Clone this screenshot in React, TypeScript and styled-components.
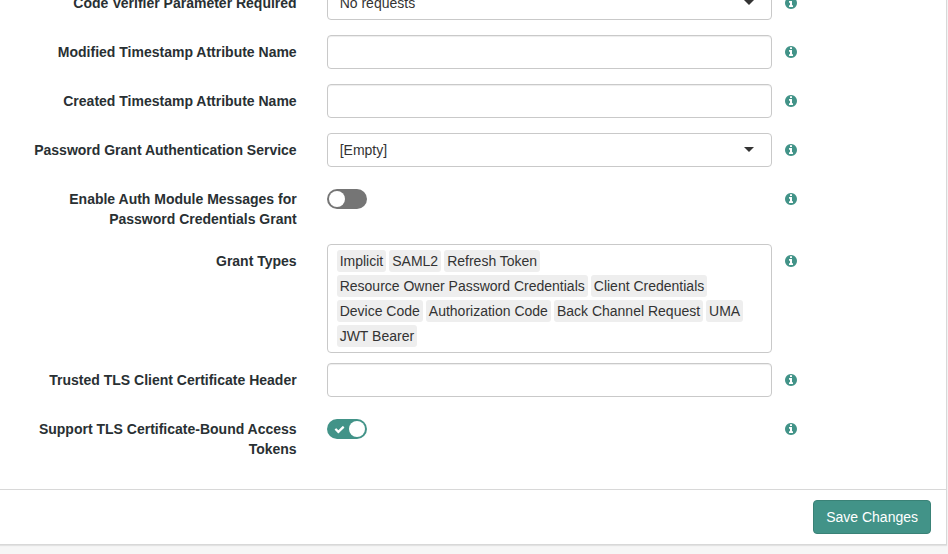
import React from "react";
import styled, { createGlobalStyle } from "styled-components";

const teal = "#429388";

const GlobalStyle = createGlobalStyle`
  * { box-sizing: border-box; }
  body {
    margin: 0;
    background: #f6f6f6;
    color: #333;
    font: 14px/20px "Liberation Sans", Arial, sans-serif;
  }
`;

const Page = styled.main`
  overflow: hidden;
  padding: 0 1px 8px 0;
`;

const Card = styled.form`
  background: #fff;
  border-right: 1px solid #d8d8d8;
  border-bottom: 1px solid #d8d8d8;
  box-shadow: 0 1px 1px rgba(0, 0, 0, 0.08);
`;

const Fields = styled.div`
  display: flex;
  flex-direction: column;
  gap: 15px;
  margin: -14px 1px 0 -5px;
  padding-bottom: 30px;
`;

const Row = styled.div<{ $tight?: boolean }>`
  display: grid;
  grid-template-columns: minmax(0, 4fr) minmax(0, 6fr) minmax(0, 2fr);
  margin-bottom: ${(p) => (p.$tight ? "-5px" : "0")};
`;

const Label = styled.label`
  padding: 7px 15px 0;
  color: #293033;
  font-weight: 700;
  text-align: right;
`;

const Control = styled.div`
  padding: 0 15px;
`;

const TextInput = styled.input`
  display: block;
  width: 100%;
  height: 34px;
  padding: 6px 12px;
  border: 1px solid #c9c9c9;
  border-radius: 4px;
  background: #fff;
  box-shadow: inset 0 1px 1px rgba(0, 0, 0, 0.075);
  color: inherit;
  font: inherit;
`;

const SelectWrap = styled.div`
  position: relative;
`;

const Select = styled.select`
  appearance: none;
  display: block;
  width: 100%;
  height: 34px;
  padding: 0 36px 0 12px;
  border: 1px solid #c9c9c9;
  border-radius: 4px;
  background: #fff;
  color: inherit;
  font: inherit;
`;

const Caret = styled.svg`
  position: absolute;
  top: 14px;
  right: 18px;
  width: 10px;
  height: 5px;
  fill: #333;
  pointer-events: none;
`;

const Switch = styled.div`
  position: relative;
  width: 40px;
  height: 20px;
  margin-top: 7px;
`;

const SwitchInput = styled.input`
  appearance: none;
  display: flex;
  align-items: center;
  width: 40px;
  height: 20px;
  margin: 0;
  padding: 0 2px;
  border-radius: 10px;
  background: #757575;
  &::after {
    content: "";
    width: 16px;
    height: 16px;
    border-radius: 50%;
    background: #fff;
  }
  &:checked {
    justify-content: flex-end;
    background: ${teal};
  }
  & + svg {
    visibility: hidden;
  }
  &:checked + svg {
    visibility: visible;
  }
`;

const CheckMark = styled.svg`
  position: absolute;
  top: 5px;
  left: 7px;
  width: 11px;
  height: 11px;
  fill: #fff;
  pointer-events: none;
`;

const Tags = styled.ul`
  display: flex;
  flex-wrap: wrap;
  gap: 3px;
  margin: 0;
  padding: 5px 9px;
  border: 1px solid #c9c9c9;
  border-radius: 4px;
  list-style: none;
`;

const Tag = styled.li`
  padding: 1px 3px;
  border-radius: 3px;
  background: #eee;
`;

const InfoButton = styled.button`
  display: block;
  width: 12px;
  height: 12px;
  margin: 11px 0 0 -2px;
  padding: 0;
  border: 0;
  background: none;
  color: ${teal};
  svg {
    display: block;
    width: 12px;
    height: 12px;
    fill: currentColor;
  }
`;

const Footer = styled.footer`
  display: flex;
  justify-content: flex-end;
  padding: 10px 15px;
  border-top: 1px solid #d8d8d8;
`;

const SaveButton = styled.button`
  height: 34px;
  padding: 0 12px;
  border: 1px solid #3a8277;
  border-radius: 4px;
  background: ${teal};
  color: #fff;
  font: inherit;
`;

function Info({ about }: { about: string }) {
  return (
    <InfoButton type="button" aria-label={`About ${about}`}>
      <svg viewBox="0 128 1536 1536" aria-hidden="true">
        <path d="M1024 1376v-160q0-14-9-23t-23-9h-96v-512q0-14-9-23t-23-9h-320q-14 0-23 9t-9 23v160q0 14 9 23t23 9h96v320h-96q-14 0-23 9t-9 23v160q0 14 9 23t23 9h448q14 0 23-9t9-23zm-128-896v-160q0-14-9-23t-23-9h-192q-14 0-23 9t-9 23v160q0 14 9 23t23 9h192q14 0 23-9t9-23zm640 416q0 209-103 385.5t-279.5 279.5-385.5 103-385.5-103-279.5-279.5-103-385.5 103-385.5 279.5-279.5 385.5-103 385.5 103 279.5 279.5 103 385.5z" />
      </svg>
    </InfoButton>
  );
}

interface FieldProps {
  id: string;
  label: string;
  tight?: boolean;
  children: React.ReactNode;
}

function Field({ id, label, tight, children }: FieldProps) {
  return (
    <Row $tight={tight}>
      <Label id={`${id}-label`} htmlFor={id}>{label}</Label>
      <Control>{children}</Control>
      <Info about={label} />
    </Row>
  );
}

function DropDown({ id, value }: { id: string; value: string }) {
  return (
    <SelectWrap>
      <Select id={id} defaultValue={value}>
        <option>{value}</option>
      </Select>
      <Caret viewBox="0 0 10 5" aria-hidden="true">
        <path d="M0 0h10L5 5z" />
      </Caret>
    </SelectWrap>
  );
}

function Toggle({ id, on }: { id: string; on?: boolean }) {
  return (
    <Switch>
      <SwitchInput id={id} type="checkbox" role="switch" defaultChecked={on} />
      <CheckMark viewBox="0 0 1792 1792" aria-hidden="true">
        <path d="M1671 566q0 40-28 68l-724 724-136 136q-28 28-68 28t-68-28l-136-136-362-362q-28-28-28-68t28-68l136-136q28-28 68-28t68 28l294 295 656-657q28-28 68-28t68 28l136 136q28 28 28 68z" />
      </CheckMark>
    </Switch>
  );
}

const grantTypes = [
  "Implicit",
  "SAML2",
  "Refresh Token",
  "Resource Owner Password Credentials",
  "Client Credentials",
  "Device Code",
  "Authorization Code",
  "Back Channel Request",
  "UMA",
  "JWT Bearer",
];

export default function App() {
  return (
    <>
      <GlobalStyle />
      <Page>
        <Card onSubmit={(e) => e.preventDefault()}>
          <Fields>
            <Field id="verifier" label="Code Verifier Parameter Required">
              <DropDown id="verifier" value="No requests" />
            </Field>
            <Field id="modified" label="Modified Timestamp Attribute Name">
              <TextInput id="modified" type="text" />
            </Field>
            <Field id="created" label="Created Timestamp Attribute Name">
              <TextInput id="created" type="text" />
            </Field>
            <Field id="service" label="Password Grant Authentication Service">
              <DropDown id="service" value="[Empty]" />
            </Field>
            <Field id="messages" label="Enable Auth Module Messages for Password Credentials Grant">
              <Toggle id="messages" />
            </Field>
            <Field id="grants" label="Grant Types" tight>
              <Tags id="grants" aria-labelledby="grants-label">
                {grantTypes.map((name) => (
                  <Tag key={name}>{name}</Tag>
                ))}
              </Tags>
            </Field>
            <Field id="tls-header" label="Trusted TLS Client Certificate Header">
              <TextInput id="tls-header" type="text" />
            </Field>
            <Field id="tls-tokens" label="Support TLS Certificate-Bound Access Tokens">
              <Toggle id="tls-tokens" on />
            </Field>
          </Fields>
          <Footer>
            <SaveButton type="submit">Save Changes</SaveButton>
          </Footer>
        </Card>
      </Page>
    </>
  );
}
